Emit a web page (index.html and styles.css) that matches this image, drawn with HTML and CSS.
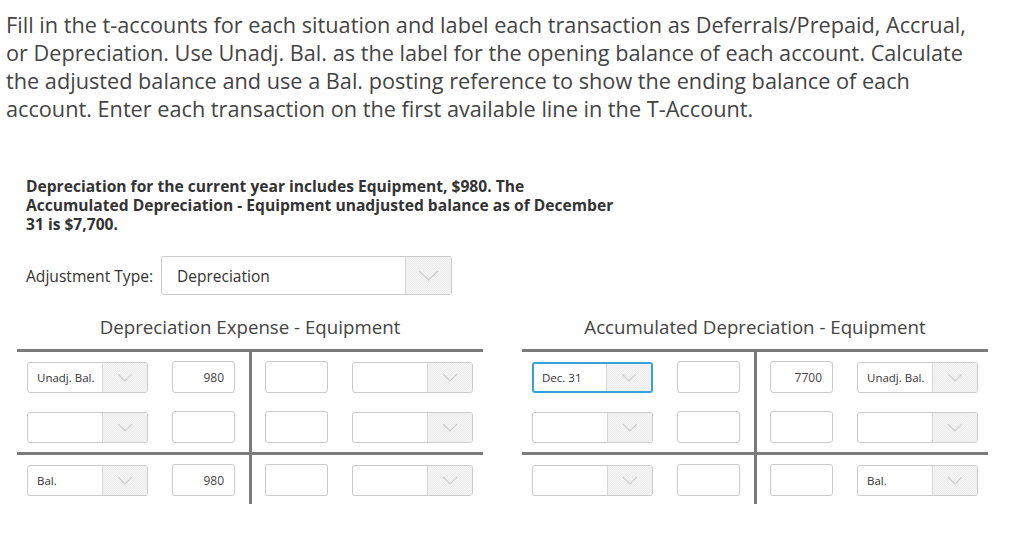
FILE: index.html
```html
<!DOCTYPE html>
<html lang="en">
<head>
    <meta charset="UTF-8">
    <title>T-Accounts</title>
    <link rel="stylesheet" href="styles.css">
</head>
<body>
    <p class="instructions">Fill in the t-accounts for each situation and label each transaction as Deferrals/Prepaid, Accrual, or Depreciation. Use Unadj. Bal. as the label for the opening balance of each account. Calculate the adjusted balance and use a Bal. posting reference to show the ending balance of each account. Enter each transaction on the first available line in the T-Account.</p>

    <div class="scenario">
        <p class="scenario-text">Depreciation for the current year includes Equipment, $980. The Accumulated Depreciation - Equipment unadjusted balance as of December 31 is $7,700.</p>

        <div class="adjust-row">
            <span class="adjust-label">Adjustment Type:</span>
            <div class="dd dd-large">
                <span class="dd-value">Depreciation</span>
                <span class="dd-arrow"><svg width="21" height="11" viewBox="0 0 21 11"><polyline points="1,1 10.5,10 20,1" fill="none" stroke="#cdcdcd" stroke-width="1.2"/></svg></span>
            </div>
        </div>
    </div>

    <div class="accounts">
        <!-- left account -->
        <div class="taccount">
            <div class="t-head">Depreciation Expense - Equipment</div>
            <div class="t-row">
                <div class="t-side debit">
                    <div class="dd"><span class="dd-value">Unadj. Bal.</span><span class="dd-arrow"><svg width="16" height="9" viewBox="0 0 16 9"><polyline points="1,1 8,8 15,1" fill="none" stroke="#cdcdcd" stroke-width="1.1"/></svg></span></div>
                    <div class="amt">980</div>
                </div>
                <div class="t-side credit">
                    <div class="amt"></div>
                    <div class="dd"><span class="dd-value"></span><span class="dd-arrow"><svg width="16" height="9" viewBox="0 0 16 9"><polyline points="1,1 8,8 15,1" fill="none" stroke="#cdcdcd" stroke-width="1.1"/></svg></span></div>
                </div>
            </div>
            <div class="t-row last-entry">
                <div class="t-side debit">
                    <div class="dd"><span class="dd-value"></span><span class="dd-arrow"><svg width="16" height="9" viewBox="0 0 16 9"><polyline points="1,1 8,8 15,1" fill="none" stroke="#cdcdcd" stroke-width="1.1"/></svg></span></div>
                    <div class="amt"></div>
                </div>
                <div class="t-side credit">
                    <div class="amt"></div>
                    <div class="dd"><span class="dd-value"></span><span class="dd-arrow"><svg width="16" height="9" viewBox="0 0 16 9"><polyline points="1,1 8,8 15,1" fill="none" stroke="#cdcdcd" stroke-width="1.1"/></svg></span></div>
                </div>
            </div>
            <div class="t-row total">
                <div class="t-side debit">
                    <div class="dd"><span class="dd-value">Bal.</span><span class="dd-arrow"><svg width="16" height="9" viewBox="0 0 16 9"><polyline points="1,1 8,8 15,1" fill="none" stroke="#cdcdcd" stroke-width="1.1"/></svg></span></div>
                    <div class="amt">980</div>
                </div>
                <div class="t-side credit">
                    <div class="amt"></div>
                    <div class="dd"><span class="dd-value"></span><span class="dd-arrow"><svg width="16" height="9" viewBox="0 0 16 9"><polyline points="1,1 8,8 15,1" fill="none" stroke="#cdcdcd" stroke-width="1.1"/></svg></span></div>
                </div>
            </div>
        </div>

        <!-- right account -->
        <div class="taccount">
            <div class="t-head">Accumulated Depreciation - Equipment</div>
            <div class="t-row">
                <div class="t-side debit">
                    <div class="dd focused"><span class="dd-value">Dec. 31</span><span class="dd-arrow"><svg width="16" height="9" viewBox="0 0 16 9"><polyline points="1,1 8,8 15,1" fill="none" stroke="#cdcdcd" stroke-width="1.1"/></svg></span></div>
                    <div class="amt"></div>
                </div>
                <div class="t-side credit">
                    <div class="amt">7700</div>
                    <div class="dd"><span class="dd-value">Unadj. Bal.</span><span class="dd-arrow"><svg width="16" height="9" viewBox="0 0 16 9"><polyline points="1,1 8,8 15,1" fill="none" stroke="#cdcdcd" stroke-width="1.1"/></svg></span></div>
                </div>
            </div>
            <div class="t-row last-entry">
                <div class="t-side debit">
                    <div class="dd"><span class="dd-value"></span><span class="dd-arrow"><svg width="16" height="9" viewBox="0 0 16 9"><polyline points="1,1 8,8 15,1" fill="none" stroke="#cdcdcd" stroke-width="1.1"/></svg></span></div>
                    <div class="amt"></div>
                </div>
                <div class="t-side credit">
                    <div class="amt"></div>
                    <div class="dd"><span class="dd-value"></span><span class="dd-arrow"><svg width="16" height="9" viewBox="0 0 16 9"><polyline points="1,1 8,8 15,1" fill="none" stroke="#cdcdcd" stroke-width="1.1"/></svg></span></div>
                </div>
            </div>
            <div class="t-row total">
                <div class="t-side debit">
                    <div class="dd"><span class="dd-value"></span><span class="dd-arrow"><svg width="16" height="9" viewBox="0 0 16 9"><polyline points="1,1 8,8 15,1" fill="none" stroke="#cdcdcd" stroke-width="1.1"/></svg></span></div>
                    <div class="amt"></div>
                </div>
                <div class="t-side credit">
                    <div class="amt"></div>
                    <div class="dd"><span class="dd-value">Bal.</span><span class="dd-arrow"><svg width="16" height="9" viewBox="0 0 16 9"><polyline points="1,1 8,8 15,1" fill="none" stroke="#cdcdcd" stroke-width="1.1"/></svg></span></div>
                </div>
            </div>
        </div>
    </div>
</body>
</html>
```

FILE: styles.css
```css
body {
    font-family: "Open Sans", "Liberation Sans", sans-serif;
    margin: 0;
    padding: 0;
    background-color: #fff;
    color: #333;
}

.instructions {
    margin: 11px 0 0 6px;
    width: 970px;
    font-size: 21.7px;
    line-height: 28px;
    color: #444;
}

.scenario {
    margin: 54px 0 0 26px;
}

.scenario-text {
    margin: 0;
    width: 590px;
    font-size: 15.6px;
    font-weight: bold;
    line-height: 19px;
    color: #333;
}

.adjust-row {
    display: flex;
    align-items: center;
    gap: 8px;
    margin-top: 22px;
}

.adjust-label {
    font-size: 15.6px;
    color: #333;
}

/* fake dropdowns */
.dd {
    box-sizing: border-box;
    display: flex;
    width: 121px;
    height: 31px;
    border: 1px solid #cbcbcb;
    border-radius: 3px;
    background: #fff;
    overflow: hidden;
}

    .dd-value {
        flex: 1;
        display: flex;
        align-items: center;
        padding-left: 9px;
        font-size: 11.5px;
        color: #333;
    }

    .dd-arrow {
        width: 44px;
        display: flex;
        align-items: center;
        justify-content: center;
        border-left: 1px solid #d6d6d6;
        background: repeating-conic-gradient(#ececec 0 25%, #f6f6f6 0 50%) 0 0 / 2px 2px;
    }

.dd.focused {
    border: 2px solid #39a0db;
}

    .dd.focused .dd-value {
        padding-left: 8px;
    }

.dd-large {
    width: 291px;
    height: 39px;
}

    .dd-large .dd-value {
        padding-left: 15px;
        font-size: 15.5px;
    }

    .dd-large .dd-arrow {
        width: 45px;
    }

.amt {
    box-sizing: border-box;
    width: 63px;
    height: 32px;
    border: 1px solid #cbcbcb;
    border-radius: 3px;
    padding-right: 10px;
    font-size: 12px;
    line-height: 31px;
    text-align: right;
    color: #444;
}

/* t-accounts */
.accounts {
    display: flex;
    gap: 39px;
    margin: 20px 0 0 17px;
}

.taccount {
    width: 466px;
}

.t-head {
    text-align: center;
    font-size: 18.7px;
    line-height: 24px;
    padding-bottom: 10px;
    border-bottom: 3px solid #7b7b7b;
    color: #444;
}

.t-row {
    display: flex;
}

    .t-row.last-entry {
        border-bottom: 3px solid #7b7b7b;
    }

.t-side {
    display: flex;
    align-items: center;
    justify-content: space-between;
    padding: 9px 0;
}

    .t-side.debit {
        width: 208px;
        padding-left: 10px;
        padding-right: 14px;
        border-right: 3px solid #7b7b7b;
    }

    .t-side.credit {
        flex: 1;
        padding-left: 13px;
        padding-right: 10px;
    }

.t-row.total .t-side {
    padding-bottom: 8px;
}
```
